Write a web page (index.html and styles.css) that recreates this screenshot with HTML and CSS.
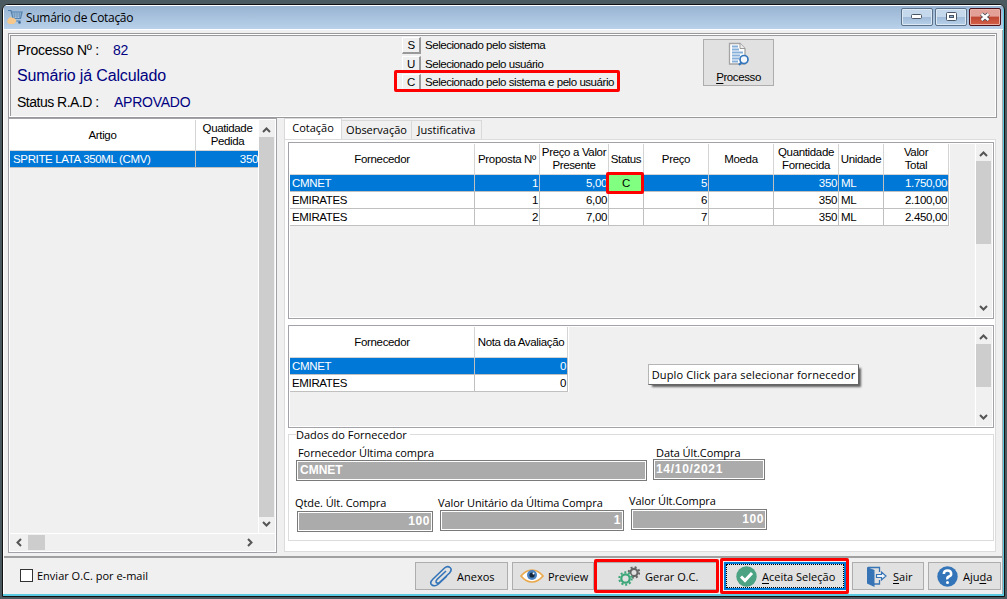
FILE: index.html
```html
<!DOCTYPE html>
<html lang="pt-BR">
<head>
  <meta charset="utf-8">
  <title>Sumário de Cotação</title>
  <link rel="stylesheet" href="styles.css">
</head>
<body>
  <svg class="defs" width="0" height="0">
    <symbol id="up" viewBox="0 0 9 6"><path d="M1 5L4.5 1.500L8 5" fill="none" stroke="#555" stroke-width="2"/></symbol>
    <symbol id="down" viewBox="0 0 9 6"><path d="M1 1L4.500 4.500L8 1" fill="none" stroke="#555" stroke-width="2"/></symbol>
    <symbol id="left" viewBox="0 0 6 9"><path d="M5 1L1.500 4.500L5 8" fill="none" stroke="#555" stroke-width="2"/></symbol>
    <symbol id="right" viewBox="0 0 6 9"><path d="M1 1L4.500 4.500L1 8" fill="none" stroke="#555" stroke-width="2"/></symbol>
  </svg>
  <div class="window">
    <div class="titlebar">
      <svg class="cart" width="16" height="16" viewBox="0 0 16 16">
        <path d="M1 1.500H4L6 9.500H13.500L15 3H5" fill="none" stroke="#4f7fad" stroke-width="1.200"/>
        <path d="M5 5H14.500M5.500 7H14M7.500 3V9.500M10 3V9.500M12.500 3V9.500" stroke="#6f97bd" stroke-width=".8"/>
        <path d="M7 12H13.500" stroke="#4f7fad"/>
        <circle cx="12.500" cy="13.500" r="1.300" fill="#3d6c9c"/>
        <path d="M1 10L3 8L8 9.500L9.500 12L7 15H2L0 13Z" fill="#f6c88b"/>
      </svg>
      <span class="title">Sumário de Cotação</span>
      <div class="win-btn"><svg width="12" height="6"><rect x=".5" y=".5" width="10" height="4" rx="1" fill="#fff" stroke="#4a5666"/></svg></div>
      <div class="win-btn"><svg width="11" height="9"><rect x=".5" y=".5" width="10" height="8" rx="1" fill="#fff" stroke="#4a5666"/><rect x="3.500" y="3.500" width="4" height="2" fill="#8fb0d2" stroke="#4a5666"/></svg></div>
      <div class="win-btn close"><svg width="12" height="10"><path d="M2.500 2L9.500 8M9.500 2L2.500 8" stroke="#4a4a58" stroke-width="4.200"/><path d="M2.500 2L9.500 8M9.500 2L2.500 8" stroke="#fff" stroke-width="2.400"/></svg></div>
    </div>

    <div class="header">
      <div class="process">
        <div class="line"><span>Processo Nº :</span><span class="navy num">82</span></div>
        <div class="line big navy">Sumário já Calculado</div>
        <div class="line"><span class="rad">Status R.A.D :</span><span class="navy">APROVADO</span></div>
      </div>
      <div class="legend">
        <div class="legend-row first"><b>S</b><span>Selecionado pelo sistema</span></div>
        <div class="legend-row"><b>U</b><span>Selecionado pelo usuário</span></div>
        <div class="legend-row"><b>C</b><span>Selecionado pelo sistema e pelo usuário</span></div>
        <div class="mark mark-legend"></div>
      </div>
      <div class="btn-process">
        <svg width="22" height="24" viewBox="0 0 22 24">
          <path d="M1.500 1.500H12L17 6.500V22H1.500Z" fill="#fff" stroke="#a4a4a4" stroke-width="1.300"/>
          <path d="M12 1.500V6.500H17" fill="#eee" stroke="#999"/>
          <path d="M4 4.500H10M4 7.500H11M4 10.500H15M4 13.500H12M4 16.500H11M4 19.500H10" stroke="#86afd9" stroke-width="1.800"/>
          <circle cx="16" cy="17.500" r="4" fill="#f4f8fc" stroke="#3475bb" stroke-width="1.700"/>
          <path d="M13.200 20.500L11 23" stroke="#3475bb" stroke-width="2"/>
        </svg>
        <span><u>P</u>rocesso</span>
      </div>
    </div>

    <div class="main">
      <div class="box items">
        <div class="items-view">
          <div class="table table-items">
            <div class="th">Artigo</div><div class="th">Quatidade<br>Pedida</div>
            <div class="td sel">SPRITE LATA 350ML (CMV)</div><div class="td sel r">350</div>
          </div>
        </div>
        <div class="vscroll"><svg width="9" height="6"><use href="#up"/></svg><i></i><svg width="9" height="6"><use href="#down"/></svg></div>
        <div class="hscroll"><svg width="6" height="9"><use href="#left"/></svg><i></i><svg width="6" height="9"><use href="#right"/></svg></div>
      </div>

      <div class="right">
        <div class="tabs">
          <div class="tab active">Cotação</div>
          <div class="tab obs">Observação</div>
          <div class="tab just">Justificativa</div>
        </div>
        <div class="page">
          <div class="box quotes">
            <div class="view">
              <div class="table table-quotes">
                <div class="th">Fornecedor</div><div class="th">Proposta Nº</div><div class="th">Preço a Valor<br>Presente</div><div class="th">Status</div><div class="th">Preço</div><div class="th">Moeda</div><div class="th">Quantidade<br>Fornecida</div><div class="th">Unidade</div><div class="th">Valor<br>Total</div>
                <div class="td sel">CMNET</div><div class="td sel r">1</div><div class="td sel r">5,00</div><div class="td status">C<div class="mark mark-status"></div></div><div class="td sel r">5</div><div class="td sel"></div><div class="td sel r">350</div><div class="td sel">ML</div><div class="td sel r">1.750,00</div>
                <div class="td">EMIRATES</div><div class="td r">1</div><div class="td r">6,00</div><div class="td"></div><div class="td r">6</div><div class="td"></div><div class="td r">350</div><div class="td">ML</div><div class="td r">2.100,00</div>
                <div class="td">EMIRATES</div><div class="td r">2</div><div class="td r">7,00</div><div class="td"></div><div class="td r">7</div><div class="td"></div><div class="td r">350</div><div class="td">ML</div><div class="td r">2.450,00</div>
              </div>
            </div>
            <div class="vscroll"><svg width="9" height="6"><use href="#up"/></svg><i></i><svg width="9" height="6"><use href="#down"/></svg></div>
          </div>

          <div class="box ratings">
            <div class="view">
              <div class="table table-ratings">
                <div class="th">Fornecedor</div><div class="th">Nota da Avaliação</div>
                <div class="td sel">CMNET</div><div class="td sel r">0</div>
                <div class="td">EMIRATES</div><div class="td r">0</div>
              </div>
            </div>
            <div class="vscroll"><svg width="9" height="6"><use href="#up"/></svg><i></i><svg width="9" height="6"><use href="#down"/></svg></div>
            <div class="tooltip">Duplo Click para selecionar fornecedor</div>
          </div>

          <div class="supplier">
            <div class="legend-title">Dados do Fornecedor</div>
            <div class="fields">
              <div class="field f-name"><label>Fornecedor Última compra</label><div class="input">CMNET</div></div>
              <div class="field f-date"><label>Data Últ.Compra</label><div class="input">14/10/2021</div></div>
            </div>
            <div class="fields second">
              <div class="field f-qty"><label>Qtde. Últ. Compra</label><div class="input r">100</div></div>
              <div class="field f-unit"><label>Valor Unitário da Última Compra</label><div class="input r">1</div></div>
              <div class="field f-total"><label>Valor Últ.Compra</label><div class="input r">100</div></div>
            </div>
          </div>
        </div>
      </div>
    </div>

    <div class="footer">
      <span class="check"></span><span class="check-label">Enviar O.C. por e-mail</span>
      <div class="btn b-anexos">
        <svg width="24" height="22" viewBox="0 0 24 22"><path d="M17 6L8 14.500Q6 17 8 18Q9.500 18.500 11 17L20.500 8Q23.500 4.500 21 2.500Q18.500 .5 15.500 3L4 14Q0 18 3 20Q6 22 9.500 19L18 11" fill="none" stroke="#3474b8" stroke-width="1.600"/></svg>
        <span>Anexos</span>
      </div>
      <div class="btn b-preview">
        <svg width="24" height="16" viewBox="0 0 24 16"><path d="M1 8Q6 2 12 2T23 8Q18 14 12 14T1 8Z" fill="#fff" stroke="#eaa94c" stroke-width="1.700"/><circle cx="12" cy="7" r="5" fill="#4a82bf"/><circle cx="12" cy="7" r="2.600" fill="#16283c"/><circle cx="13.500" cy="5.500" r="1" fill="#fff"/></svg>
        <span>Preview</span>
      </div>
      <div class="btn b-gerar">
        <svg width="22" height="20" viewBox="0 0 22 20"><circle cx="16" cy="6.500" r="3.600" fill="none" stroke="#666" stroke-width="2.200"/><circle cx="16" cy="6.500" r="5.300" fill="none" stroke="#666" stroke-width="2" stroke-dasharray="2 2.163"/><circle cx="7.500" cy="12.500" r="6.600" fill="#e1e1e1"/><circle cx="7.500" cy="12.500" r="4.200" fill="none" stroke="#3ca679" stroke-width="2.200"/><circle cx="7.500" cy="12.500" r="6.200" fill="none" stroke="#3ca679" stroke-width="2" stroke-dasharray="2 1.895"/></svg>
        <span>Gerar O.C.</span>
        <div class="mark mark-btn"></div>
      </div>
      <div class="btn b-aceita">
        <svg width="21" height="21" viewBox="0 0 21 21"><circle cx="10.500" cy="10.500" r="10.200" fill="#4ba383"/><path d="M5 10.500L9 14.500L16 7" fill="none" stroke="#fff" stroke-width="3"/></svg>
        <span><u>A</u>ceita Seleção</span>
        <div class="mark mark-focus"></div>
      </div>
      <div class="btn b-sair">
        <svg width="21" height="21" viewBox="0 0 21 21"><path d="M2 1.500H13.500V6M13.500 14V18H8" fill="none" stroke="#3674b5" stroke-width="1.300"/><path d="M1 1L8.500 4V21L1 17.500Z" fill="#3674b5"/><path d="M10.500 8.500H15.500V6L20 10L15.500 14V11.500H10.500Z" fill="#eef4fa" stroke="#3674b5" stroke-width="1.200"/></svg>
        <span><u>S</u>air</span>
      </div>
      <div class="btn b-ajuda">
        <svg width="21" height="21" viewBox="0 0 21 21"><circle cx="10.500" cy="10.500" r="10.200" fill="#3474b8"/><path d="M6.800 8Q6.800 4.500 10.500 4.500T14.200 8Q14.200 9.700 12 10.500T10.500 13.300" fill="none" stroke="#fff" stroke-width="2.500"/><circle cx="10.500" cy="16.500" r="1.500" fill="#fff"/></svg>
        <span>Aju<u>d</u>a</span>
      </div>
    </div>
  </div>
</body>
</html>
```
FILE: styles.css
```css
* {
  box-sizing: border-box;
}

body {
  margin: 0;
  width: 1007px;
  height: 599px;
  padding: 4px 2px 2px 2px;
  overflow: hidden;
  background: #4a5a60;
  font: 11px/13px "Open Sans", sans-serif;
  color: #000;
}

.defs {
  display: block;
}

.window {
  width: 1003px;
  height: 593px;
  border: 1px solid #111;
  border-radius: 6px 6px 0 0;
  background: #f0f0f0;
  box-shadow: inset -1px -2px #5ccbe2, inset -2px 0 #a5a9ad, inset 1px 1px #fff;
  overflow: hidden;
}

/* title bar */
.titlebar {
  display: flex;
  align-items: center;
  height: 25px;
  margin: 0 1px;
  padding: 0 2px 0 3px;
  border-top: 1px solid #fff;
  border-bottom: 1px solid #fff;
  background: linear-gradient(#98b4d2, #b9d1ea);
}

.title {
  flex: 1;
  margin-left: 3px;
  font-size: 12px;
  letter-spacing: -0.3px;
}

.cart {
  margin-bottom: 1px;
}

.win-btn {
  display: flex;
  align-items: center;
  justify-content: center;
  width: 32px;
  height: 18px;
  margin: 0 0 2px 2px;
  border: 1px solid #5b7089;
  border-radius: 2px;
  background: linear-gradient(#c5d8ec 50%, #a0bbd9 50%, #b8d0e9);
  box-shadow: inset 0 0 0 1px #dce8f4;
}

.win-btn.close {
  border-color: #4d1119;
  background: linear-gradient(#e2a096 45%, #bf4630 50%, #d4614a);
  box-shadow: inset 0 0 0 1px #e9b0a5;
}

/* top panel */
.header {
  display: flex;
  width: 989px;
  height: 85px;
  margin: 3px 0 0 5px;
  border: 1px solid #98989d;
  box-shadow: inset 0 0 0 1px #fff, inset 3px 3px 0 -1px #98989d;
  font-family: "Liberation Sans", sans-serif;
}

.process {
  width: 393px;
  padding: 7px 0 0 8px;
  font-size: 14px;
  line-height: 18px;
  letter-spacing: -0.25px;
}

.line {
  height: 26px;
}

.line.big {
  font-size: 16px;
  letter-spacing: -0.15px;
}

.navy {
  color: #000080;
}

.num {
  margin-left: 14px;
}

.rad {
  display: inline-block;
  width: 97px;
  letter-spacing: -0.5px;
}

.legend {
  position: relative;
  width: 301px;
  padding-top: 2px;
  font-size: 11.5px;
  letter-spacing: -0.45px;
}

.legend-row {
  display: flex;
  align-items: center;
  height: 18px;
}

.legend-row.first {
  margin-bottom: 1px;
}

.legend-row b {
  width: 19px;
  height: 17px;
  margin-right: 4px;
  border: 1px solid #fff;
  border-right: 2px solid #999;
  border-bottom: 2px solid #999;
  font-weight: normal;
  line-height: 15px;
  text-align: center;
}

.mark {
  position: absolute;
  border: 3px solid #f00;
  border-radius: 2px;
}

.mark-legend {
  left: -8px;
  top: 36px;
  width: 226px;
  height: 22px;
}

.btn-process {
  display: flex;
  flex-direction: column;
  align-items: center;
  width: 71px;
  height: 47px;
  margin-top: 5px;
  padding-top: 2px;
  border: 1px solid #adadad;
  background: #e1e1e1;
  font-size: 11.5px;
  letter-spacing: -0.4px;
}

.btn-process span {
  margin-top: 5px;
}

u {
  text-underline-offset: 2px;
}

/* grids */
.main {
  display: flex;
  height: 436px;
  margin-left: 5px;
}

.box {
  position: relative;
  border: 1px solid #a2a2a8;
  background: #f0f0f0;
  box-shadow: inset 0 0 0 1px #fff;
  padding: 1px;
}

.items {
  display: grid;
  grid-template-columns: 1fr 17px;
  grid-template-rows: 1fr 18px;
  width: 269px;
  height: 435px;
}

.items-view {
  overflow: hidden;
}

.view {
  flex: 1;
}

.table {
  display: grid;
  font: 11.5px/13px "Liberation Sans", sans-serif;
  letter-spacing: -0.35px;
}

.table-items {
  grid-template-columns: 186px 64px;
  grid-template-rows: 31px 17px;
}

.table-items .td:nth-child(3) {
  padding-left: 3px;
}

.table-quotes {
  grid-template-columns: 185px 65px 69px 35px 65px 65px 65px 45px 65px;
  grid-template-rows: 31px repeat(3, 17px);
  width: 660px;
  border-right: 1px solid #fff;
}

.table-ratings {
  grid-template-columns: 185px 93px;
  grid-template-rows: 31px repeat(2, 17px);
  width: 279px;
  border-right: 1px solid #fff;
}

.th {
  display: flex;
  align-items: center;
  justify-content: center;
  border-right: 1px solid #d4d4d4;
  border-bottom: 1px solid #d4d4d4;
  background: #fff;
  text-align: center;
  white-space: nowrap;
}

.td {
  padding: 0 2px;
  border-right: 1px solid #c0c0c0;
  border-bottom: 1px solid #c0c0c0;
  background: #fff;
  line-height: 17px;
  white-space: nowrap;
}

.td.sel {
  background: #0078d7;
  color: #fff;
}

.r {
  text-align: right;
}

.table .r {
  padding-right: 1px;
}

.td.status {
  position: relative;
  background: #80ff80;
  text-align: center;
}

.mark-status {
  left: -3px;
  top: -3px;
  width: 38px;
  height: 22px;
}

.vscroll {
  display: flex;
  flex-direction: column;
  align-items: center;
  width: 17px;
  padding: 7px 1px 6px 0;
  border-left: 1px solid #fff;
}

.vscroll i {
  width: 15px;
  margin: 4px 0 auto;
  background: #cdcdcd;
}

.items .vscroll i {
  height: 380px;
}

.hscroll {
  display: flex;
  grid-column: 1 / 3;
  align-items: center;
  padding: 0 22px 0 6px;
  border-top: 1px solid #fff;
}

.hscroll i {
  width: 17px;
  height: 15px;
  margin: 0 auto 0 6px;
  background: #cdcdcd;
}

/* tabs */
.right {
  width: 712px;
  margin-left: 7px;
}

.tabs {
  display: flex;
  align-items: flex-end;
  height: 21px;
}

.tab {
  height: 19px;
  border: 1px solid #d9d9d9;
  border-left: 0;
  border-bottom: 0;
  line-height: 18px;
  text-align: center;
}

.tab.active {
  width: 58px;
  height: 21px;
  border-left: 1px solid #d9d9d9;
  background: #fff;
  line-height: 18px;
}

.tab.obs {
  width: 70px;
}

.tab.just {
  width: 70px;
}

.page {
  height: 413px;
  padding: 2px 1px 0 3px;
  border: 1px solid #dcdcdc;
  background: #fff;
}

.quotes,
.ratings {
  display: flex;
  width: 706px;
}

.quotes {
  height: 177px;
}

.quotes .vscroll i {
  height: 83px;
}

.ratings {
  height: 103px;
  margin-top: 6px;
}

.ratings .vscroll i {
  height: 43px;
}

.tooltip {
  position: absolute;
  left: 359px;
  top: 38px;
  width: 211px;
  height: 21px;
  border: 1px solid #b5b5b5;
  border-right-color: #646464;
  border-bottom-color: #646464;
  background: #fff;
  box-shadow: 3px 3px 2px -1px rgba(0, 0, 0, 0.6);
  line-height: 20px;
  letter-spacing: 0.13px;
  text-align: center;
  white-space: nowrap;
}

/* supplier data */
.supplier {
  width: 706px;
  height: 107px;
  margin-top: 6px;
  border: 1px solid #dcdcdc;
}

.legend-title {
  width: 114px;
  height: 13px;
  margin: -7px 0 0 7px;
  background: #fff;
}

.fields {
  display: flex;
  margin: 4px 0 0 7px;
}

.fields.second {
  margin: 14px 0 0 8px;
}

.field label {
  display: block;
  margin-left: 2px;
  height: 15px;
  line-height: 15px;
  letter-spacing: -0.08px;
  white-space: nowrap;
}

.input {
  height: 21px;
  padding: 0 1px 0 3px;
  border: 1px solid #7a7a7a;
  background: #ababab;
  box-shadow: inset 0 0 0 1px #fff;
  color: #fff;
  font: bold 12px/18px "Liberation Sans", sans-serif;
}

.input.r {
  padding-right: 2px;
  letter-spacing: 0.6px;
}

.f-name {
  width: 351px;
}

.f-date {
  width: 112px;
  margin-left: 6px;
}

.f-date label {
  height: 14px;
  margin-left: 3px;
}

.f-date .input {
  padding-left: 2px;
  letter-spacing: 0.7px;
}

.f-qty {
  width: 136px;
}

.f-unit {
  width: 184px;
  margin-left: 7px;
}

.f-total {
  width: 136px;
  margin: -2px 0 0 7px;
}

.f-qty label,
.f-unit label,
.f-total label {
  margin-left: -2px;
}

.f-qty label,
.f-total label {
  height: 16px;
}

/* footer */
.footer {
  display: flex;
  height: 38px;
  margin: 2px 2px 0 1px;
  padding: 4px 0 0 16px;
  border-top: 2px solid #a0a0a0;
}

.check {
  width: 13px;
  height: 13px;
  margin-top: 7px;
  border: 1px solid #333;
  background: #fff;
}

.check-label {
  width: 378px;
  margin: 7px 0 0 4px;
}

.btn {
  display: flex;
  position: relative;
  align-items: center;
  height: 28px;
  border: 1px solid #adadad;
  background: #e1e1e1;
  white-space: nowrap;
}

.btn span {
  margin-left: 5px;
}

.b-anexos {
  width: 93px;
  padding-left: 13px;
}

.b-preview {
  width: 82px;
  margin-left: 4px;
  padding-left: 7px;
}

.b-anexos span,
.b-preview span {
  margin-left: 4px;
}

.b-gerar {
  width: 125px;
  padding-left: 23px;
}

.b-aceita {
  width: 122px;
  margin-left: 5px;
  padding-left: 10px;
  border: 2px solid #0078d7;
  outline: 1px dotted #000;
  outline-offset: -3px;
}

.b-sair {
  width: 72px;
  margin-left: 6px;
  padding-left: 13px;
}

.b-sair span {
  margin-left: 6px;
}

.b-ajuda {
  width: 73px;
  margin-left: 4px;
  padding-left: 8px;
}

.mark-btn {
  inset: -4px -1px -4px -1px;
}

.mark-focus {
  inset: -6px -5px -6px -6px;
}
```
